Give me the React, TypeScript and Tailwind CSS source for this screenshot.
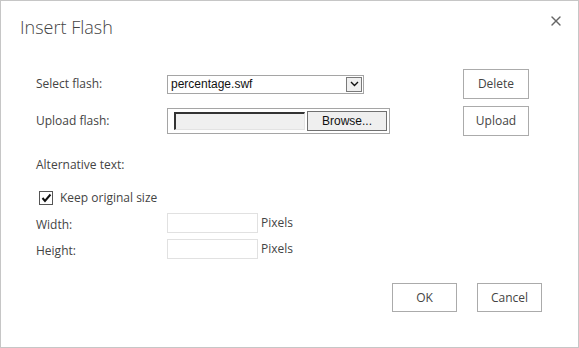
import { X } from "lucide-react";

const font = "font-['Segoe_UI','Open_Sans',sans-serif]";

const FlatButton = ({ label, className = "" }: { label: string; className?: string }) => (
  <button
    className={`h-[30px] w-[66px] border border-[#ababab] bg-white text-[12px] text-[#444] ${className}`}
  >
    {label}
  </button>
);

const SizeRow = ({ label }: { label: string }) => (
  <div className="flex h-[20px] items-center">
    <span className="w-[131px] pt-[3px] text-[12px] text-[#444]">{label}</span>
    <div className="h-[20px] w-[91px] border border-[#e1e1e1] bg-white" />
    <span className="ml-[3px] text-[12px] text-[#444]">Pixels</span>
  </div>
);

export default function App() {
  return (
    <div className={`h-[348px] w-[579px] border border-[#c6c6c6] bg-white ${font}`}>
      <div className="flex items-start justify-between">
        <h1 className="pl-[19px] pt-[13px] text-[18px] font-light leading-[26px] text-[#444]">
          Insert Flash
        </h1>
        <button className="mr-[14px] mt-[12px] text-[#666]">
          <X className="h-[16px] w-[16px]" strokeWidth={2} />
        </button>
      </div>

      <div className="mt-[29px] grid grid-cols-[131px_296px_66px] gap-y-[7px] pl-[35px]">
        <div className="flex h-[30px] items-center text-[12px] text-[#444]">Select flash:</div>
        <div className="flex h-[30px] items-center">
          <div className="flex h-[19px] w-[197px] items-center border border-[#a5a5a5] bg-white font-['Liberation_Sans',Arial,sans-serif] text-[12px] text-[#111]">
            <span className="flex-1 pl-[3px] leading-none">percentage.swf</span>
            <span className="m-[1px] flex h-[15px] w-[16px] items-center justify-center border border-[#7a7a7a] bg-[#f0f0f0]">
              <svg width="9" height="6" viewBox="0 0 9 6">
                <path d="M1 1 L4.5 4.5 L8 1" stroke="#111" strokeWidth="1.4" fill="none" />
              </svg>
            </span>
          </div>
        </div>
        <FlatButton label="Delete" />

        <div className="flex h-[30px] items-center text-[12px] text-[#444]">Upload flash:</div>
        <div className="flex h-[30px] items-center">
          <div className="flex h-[26px] w-[223px] items-center gap-[2px] border border-[#a5a5a5] bg-white pl-[6px]">
            <div className="h-[18px] w-[131px] border-l-2 border-t-2 border-b border-r border-l-[#333] border-t-[#333] border-b-[#e3e3e3] border-r-[#e3e3e3] bg-[#f0f0f0]" />
            <div className="flex h-[20px] w-[80px] items-center justify-center border border-[#707070] bg-[#efefef] font-['Liberation_Sans',Arial,sans-serif] text-[12px] text-[#111]">
              Browse...
            </div>
          </div>
        </div>
        <FlatButton label="Upload" />
      </div>

      <div className="mt-[19px] pl-[35px] text-[12px] leading-[20px] text-[#444]">Alternative text:</div>

      <div className="mt-[13px] flex h-[20px] items-center pl-[38px] text-[12px] text-[#444]">
        <span className="flex h-[14px] w-[14px] items-center justify-center border border-[#555] bg-white">
          <svg width="11" height="10" viewBox="0 0 11 10">
            <path d="M1.5 5 L4 8 L9.5 1.5" stroke="#111" strokeWidth="2" fill="none" />
          </svg>
        </span>
        <span className="ml-[7px]">Keep original size</span>
      </div>

      <div className="mt-[5px] flex flex-col gap-[6px] pl-[35px]">
        <SizeRow label="Width:" />
        <SizeRow label="Height:" />
      </div>

      <div className="mt-[24px] flex justify-end gap-[20px] pr-[36px]">
        <button className="h-[29px] w-[65px] border border-[#ababab] bg-white text-[12px] text-[#444]">OK</button>
        <button className="h-[29px] w-[65px] border border-[#ababab] bg-white text-[12px] text-[#444]">Cancel</button>
      </div>
    </div>
  );
}
